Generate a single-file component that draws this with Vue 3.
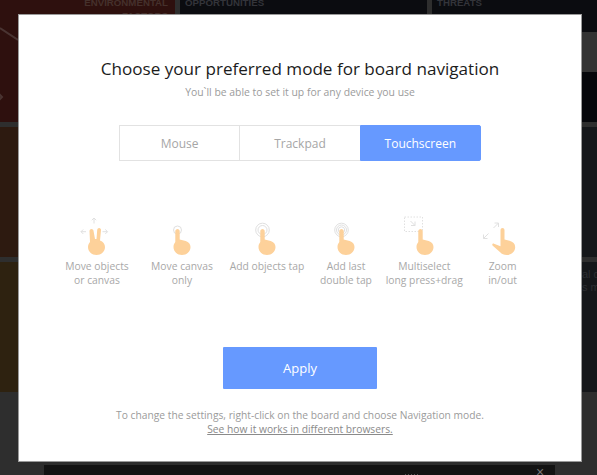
<template>
  <div class="page">
    <!-- board behind the dialog -->
    <div class="board">
      <div class="col col-left">
        <div class="tile tile-red">
          <span class="tile-label right">ENVIRONMENTAL<br />FACTORS</span>
          <svg class="tile-mark" width="18" height="110" viewBox="0 0 18 110">
            <path d="M0 28l18 12" />
            <path d="M-1 94l3 3-3 3" />
          </svg>
        </div>
        <div class="tile tile-brown"></div>
        <div class="tile tile-olive"></div>
      </div>
      <div class="col col-mid">
        <div class="tile tile-navy"><span class="tile-label">OPPORTUNITIES</span></div>
        <div class="tile tile-dark"></div>
        <div class="tile tile-dark"></div>
      </div>
      <div class="col col-right">
        <div class="tile tile-navy"><span class="tile-label">THREATS</span></div>
        <div class="tile tile-dark"></div>
        <div class="tile tile-dark"><span class="side-text">al d<br />s m</span></div>
      </div>
    </div>
    <div class="toolbar">
      <span class="toolbar-bars"></span>
      <span class="toolbar-close">×</span>
    </div>

    <!-- navigation mode dialog -->
    <div class="modal">
      <h1 class="title">Choose your preferred mode for board navigation</h1>
      <p class="subtitle">You`ll be able to set it up for any device you use</p>

      <div class="tabs">
        <div v-for="tab in tabs" :key="tab" class="tab" :class="{ active: tab === current }">{{ tab }}</div>
      </div>

      <div class="gestures">
        <div v-for="g in gestures" :key="g.id" class="gesture">
          <svg class="gesture-icon" width="60" height="50" viewBox="0 0 60 50">
            <!-- two fingers + arrows -->
            <template v-if="g.id === 'move'">
              <g class="hint">
                <path d="M27 9v5.500M24.800 11.200 27 9l2.200 2.200" />
                <path d="M14 22.700h5M16.200 20.500 14 22.700l2.200 2.200" />
                <path d="M35.500 22.700h5M38.300 20.500l2.200 2.200-2.200 2.200" />
              </g>
              <path class="finger" d="M24.500 20c1 0 1.800.7 2 1.800L28 30h1.500l.7-9c.1-1.200 1-2 2-2s2 1 1.800 2.200L33 31.500c3 1.200 5 3.500 5 6.500 0 4.700-3.800 8-8.500 8S21 42.700 21 38c0-1.800.6-3.500 2-5l-.5-11c0-1.200 1-2 2-2z" />
            </template>

            <!-- single tap -->
            <template v-else-if="g.id === 'canvas'">
              <g class="hint">
                <circle cx="25.500" cy="21" r="4" />
              </g>
              <path class="finger" :d="hand" />
            </template>

            <!-- tap with rings -->
            <template v-else-if="g.id === 'tap'">
              <g class="hint">
                <circle cx="25.500" cy="21" r="4.500" />
                <circle cx="25.500" cy="21" r="6.800" />
              </g>
              <path class="finger" :d="hand" />
            </template>

            <template v-else-if="g.id === 'double'">
              <g class="hint">
                <circle cx="25.500" cy="21" r="3.200" />
                <circle cx="25.500" cy="21" r="5" />
                <circle cx="25.500" cy="21" r="6.800" />
              </g>
              <path class="finger" :d="hand" />
            </template>

            <!-- dashed selection box -->
            <template v-else-if="g.id === 'select'">
              <g class="hint">
                <rect x="10.500" y="8" width="18" height="14.500" stroke-dasharray="1.500 1.500" />
                <path d="M16.500 12l4.500 4.500M21 12.500v4h-4" />
              </g>
              <path class="finger" :d="hand" transform="translate(1 0)" />
            </template>

            <!-- pinch -->
            <template v-else>
              <g class="hint">
                <path d="M10.500 29.500l5-5M10.500 25.500v4h4" />
                <path d="M20.500 19l5-5M21.500 14h4v4" />
              </g>
              <path class="finger" d="M29.500 19c1.100 0 2 .9 2 2.200V30.500l5 1.200c3.500 1 5.700 3 5.700 6.300 0 4.700-3.800 8-8.500 8-2.700 0-5-1-6.500-2.800L19.500 36.500c-.7-1 .3-2.200 1.500-1.800l6.500 2.500V21.200c0-1.300.9-2.200 2-2.200z" />
            </template>
          </svg>
          <div class="gesture-label">
            <span v-for="line in g.lines" :key="line">{{ line }}</span>
          </div>
        </div>
      </div>

      <button class="apply">Apply</button>

      <p class="note">
        To change the settings, right-click on the board and choose Navigation mode.<br />
        <a class="note-link">See how it works in different browsers.</a>
      </p>
    </div>
  </div>
</template>

<script setup>
const tabs = ['Mouse', 'Trackpad', 'Touchscreen']
const current = 'Touchscreen'

// hand with one finger, shared by several icons
const hand = 'M25.500 20c1.200 0 2.200 1 2.200 2.200V30.500l6 1.500c3 1 4.800 3 4.800 6 0 4.700-3.800 8-8.500 8s-8.500-3.300-8.500-8c0-2 .6-3.500 1.800-5V22.200c0-1.200 1-2.200 2.200-2.200z'

const gestures = [
  { id: 'move', lines: ['Move objects', 'or canvas'] },
  { id: 'canvas', lines: ['Move canvas', 'only'] },
  { id: 'tap', lines: ['Add objects tap'] },
  { id: 'double', lines: ['Add last', 'double tap'] },
  { id: 'select', lines: ['Multiselect', 'long press+drag'] },
  { id: 'zoom', lines: ['Zoom', 'in/out'] }
]
</script>

<style>
html,
body {
  margin: 0;
  background: #2e2e2e;
}
</style>

<style scoped>
.page {
  position: relative;
  width: 597px;
  height: 475px;
  overflow: hidden;
  background: #2e2e2e;
  font-family: "Open Sans", "Liberation Sans", sans-serif;
}

/* board */
.board {
  display: grid;
  grid-template-columns: 175px 247px 165px;
  column-gap: 5px;
}

.col {
  display: flex;
  flex-direction: column;
  gap: 5px;
}

.tile {
  position: relative;
  height: 130px;
  overflow: hidden;
  font-family: "Liberation Sans", sans-serif;
  font-size: 9.700px;
  font-weight: 700;
  color: #33343a;
}

.tile:first-child {
  height: 122px;
}

.tile-label {
  display: block;
  margin-top: -4px;
  padding: 0 5px;
  line-height: 13px;
}

.tile-label.right {
  padding-right: 7px;
  text-align: right;
  color: #45302c;
}

.tile-mark {
  position: absolute;
  left: 0;
  top: 0;
  fill: none;
  stroke: #4a3432;
  stroke-width: 2;
}

.tile-red {
  background: #2e100e;
}

.tile-brown {
  background: #2d1a10;
}

.tile-olive {
  background: #2e2210;
}

.tile-navy {
  background: linear-gradient(#0b0c10 0 32px, #06070b 32px);
}

.col-right .tile-navy {
  background: linear-gradient(#0b0c10 0 32px, #333 32px 72px, #06070b 72px);
}

.tile-dark {
  background: #15171a;
}

.side-text {
  display: block;
  padding: 6px 0 0 150px;
  font-size: 11px;
  line-height: 13px;
  font-weight: 400;
  white-space: nowrap;
  color: #2c2e32;
}

.toolbar {
  position: absolute;
  left: 44px;
  top: 465px;
  width: 511px;
  height: 10px;
  background: #131313;
  overflow: hidden;
}

.toolbar-bars {
  position: absolute;
  left: 361px;
  top: 9px;
  width: 15px;
  height: 1px;
  background: repeating-linear-gradient(90deg, #555 0 1px, transparent 1px 3px);
}

.toolbar-close {
  position: absolute;
  left: 492px;
  top: 0;
  font-family: "Liberation Sans", sans-serif;
  font-size: 14px;
  line-height: 14px;
  color: #777;
}

/* dialog */
.modal {
  position: absolute;
  left: 18px;
  top: 14px;
  width: 562px;
  height: 446px;
  border: 1px solid #9a9a9a;
  background: #fff;
  display: flex;
  flex-direction: column;
  align-items: center;
}

.title {
  margin: 42px 0 0;
  font-size: 17.100px;
  font-weight: 400;
  line-height: 24px;
  color: #1c1c1c;
}

.subtitle {
  margin: 4px 0 0;
  font-size: 10.400px;
  line-height: 14px;
  color: #9b9b9b;
}

.tabs {
  display: flex;
  margin-top: 26px;
  width: 362px;
  height: 36px;
}

.tab {
  flex: 1;
  display: flex;
  align-items: center;
  justify-content: center;
  box-sizing: border-box;
  border: 1px solid #e2e2e2;
  border-right: none;
  font-size: 12px;
  color: #a6a6a6;
}

.tab:last-child {
  border-right: 1px solid #e2e2e2;
}

.tab.active {
  border-color: #6699ff;
  border-radius: 0 2px 2px 0;
  background: #6699ff;
  color: #fff;
}

.gestures {
  display: grid;
  grid-template-columns: 84px 86px 84px 74px 82.600px 74px;
  margin: 48px 5.400px 0 0;
}

.gesture {
  display: flex;
  flex-direction: column;
  align-items: center;
}

.gesture-icon {
  display: block;
}

.hint {
  fill: none;
  stroke: #e0e0e0;
  stroke-width: 1;
}

.finger {
  fill: #fdd19a;
}

.gesture-label {
  display: flex;
  flex-direction: column;
  align-items: center;
  font-size: 10.300px;
  line-height: 14.300px;
  white-space: nowrap;
  color: #a8a8a8;
}

.apply {
  margin-top: 59px;
  width: 154px;
  height: 42px;
  border: none;
  border-radius: 1px;
  background: #6699ff;
  color: #fff;
  font-family: inherit;
  font-size: 13px;
}

.note {
  margin: 19px 0 0;
  font-size: 10.250px;
  line-height: 14.500px;
  text-align: center;
  color: #9b9b9b;
}

.note-link {
  text-decoration: underline;
  color: #8a8a8a;
}
</style>
